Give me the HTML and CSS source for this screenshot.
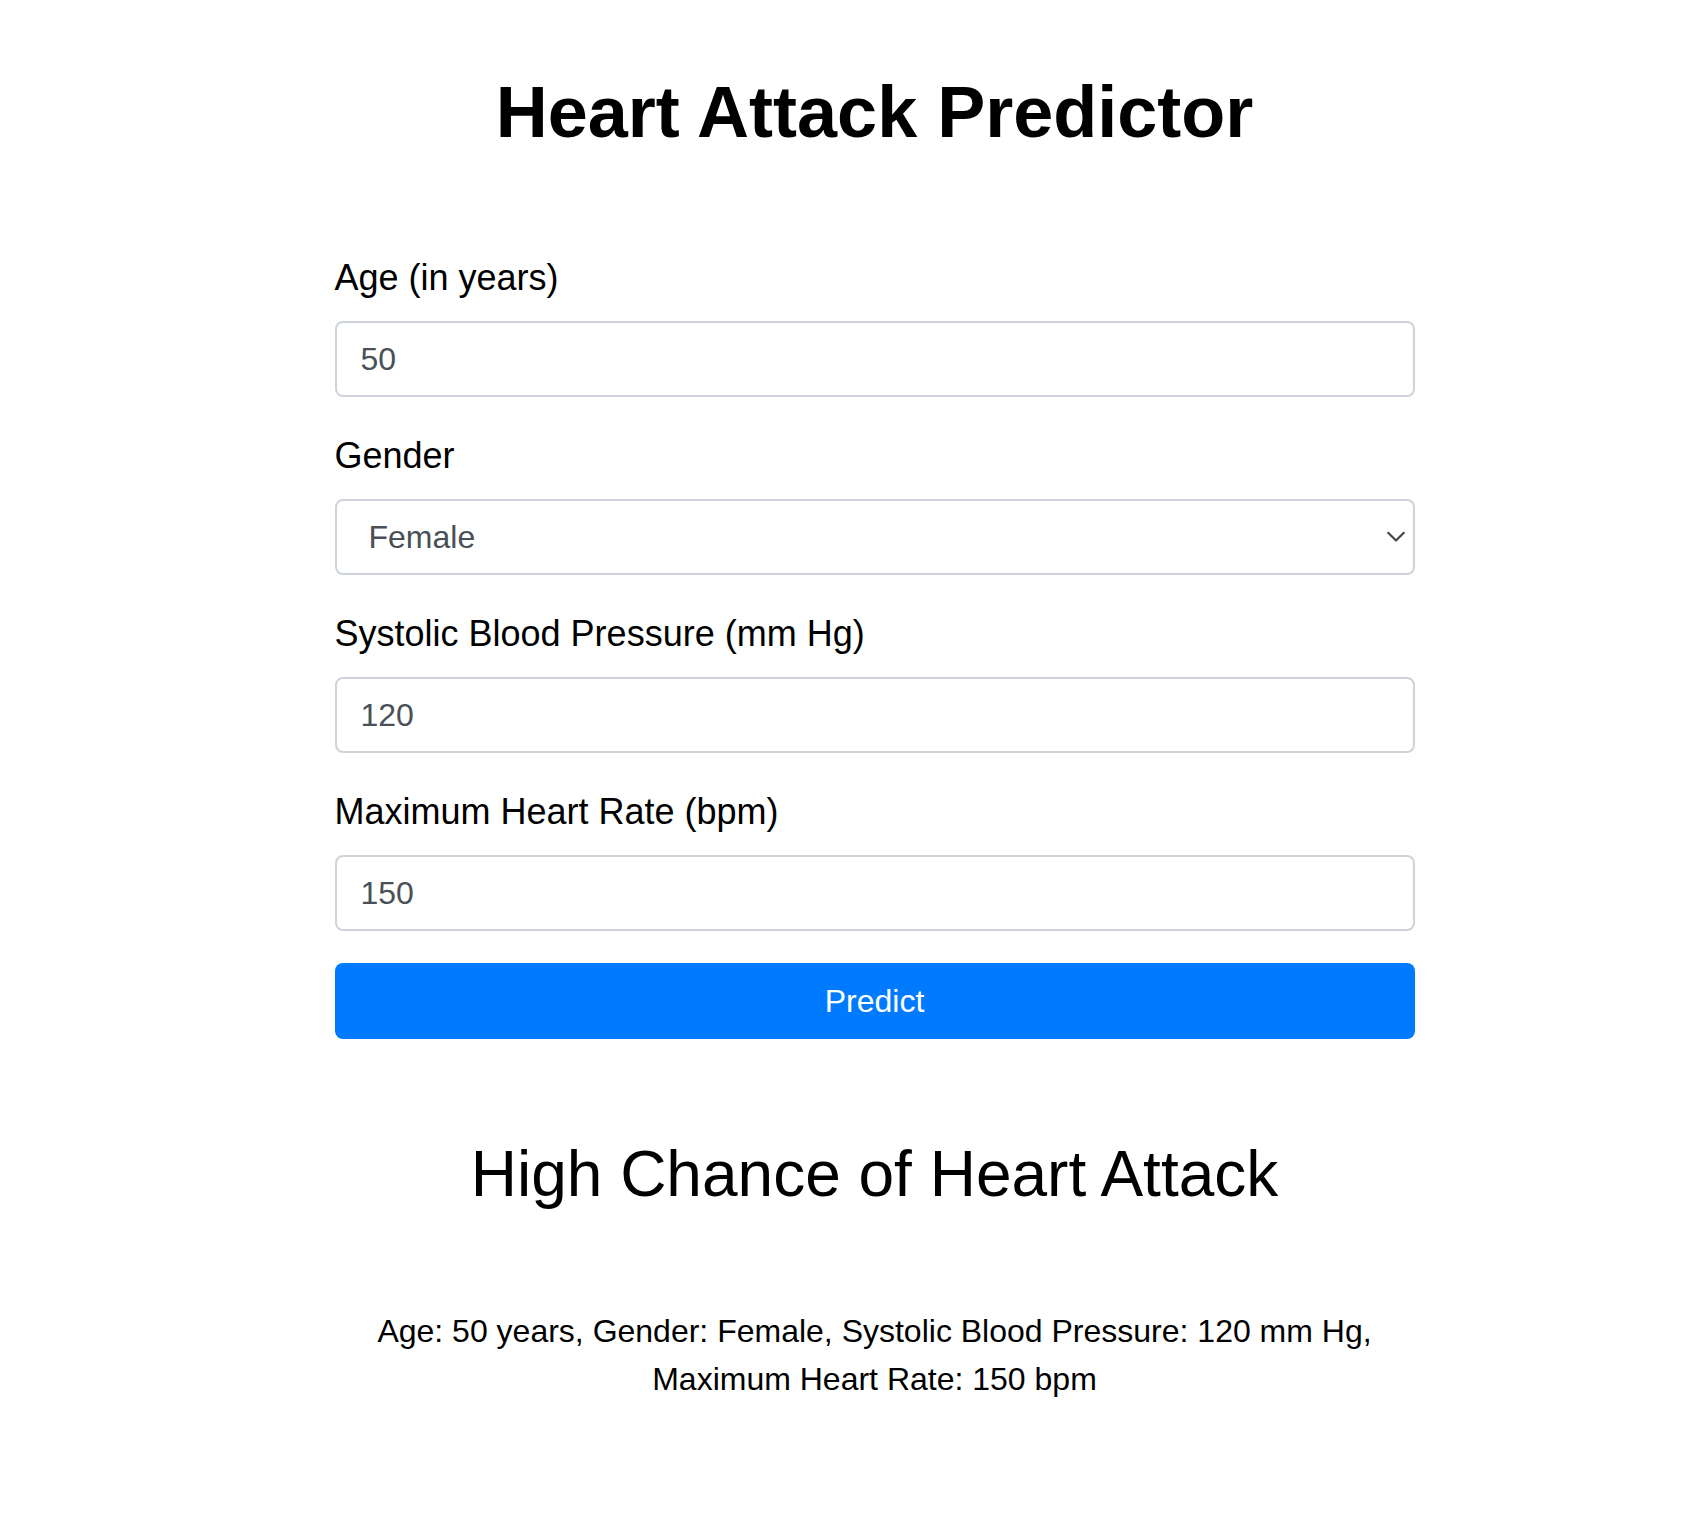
FILE: index.html
```html
<!DOCTYPE html>
<html lang="en">
<head>
<meta charset="utf-8">
<title>Heart Attack Predictor</title>
<link rel="stylesheet" href="styles.css">
</head>
<body>
<div class="container">
  <h1 class="title">Heart Attack Predictor</h1>
  <form class="form">
    <div class="group">
      <label class="label" for="age">Age (in years)</label>
      <input class="field" id="age" type="text" value="50">
    </div>
    <div class="group">
      <label class="label" for="gender">Gender</label>
      <div class="select-wrap">
        <select class="field select" id="gender">
          <option>Female</option>
          <option>Male</option>
        </select>
        <svg class="chevron" width="18" height="11" viewBox="0 0 18 11"><path d="M1.2 1.2 L9 9 L16.8 1.2" fill="none" stroke="#45494d" stroke-width="2.2" stroke-linecap="round" stroke-linejoin="round"/></svg>
      </div>
    </div>
    <div class="group">
      <label class="label" for="sbp">Systolic Blood Pressure (mm Hg)</label>
      <input class="field" id="sbp" type="text" value="120">
    </div>
    <div class="group">
      <label class="label" for="hr">Maximum Heart Rate (bpm)</label>
      <input class="field" id="hr" type="text" value="150">
    </div>
    <button class="btn" type="button">Predict</button>
  </form>
  <div class="result">
    <h2 class="result-title">High Chance of Heart Attack</h2>
    <p class="result-text">Age: 50 years, Gender: Female, Systolic Blood Pressure: 120 mm Hg, Maximum Heart Rate: 150 bpm</p>
  </div>
</div>
</body>
</html>
```
FILE: styles.css
```css
html, body {
  margin: 0;
  background: #fff;
}
body {
  padding: 0 0 0 42px;
  font-family: "Liberation Sans", Arial, sans-serif;
  color: #000;
}
.container {
  width: 1080px;
  margin: 0 auto;
  padding-top: 69px;
}
.title {
  margin: 0 0 96px;
  font-size: 72px;
  line-height: 86.4px;
  font-weight: 700;
  text-align: center;
}
.form {
  display: flex;
  flex-direction: column;
}
.group {
  display: flex;
  flex-direction: column;
  margin-bottom: 32px;
}
.label {
  font-size: 36px;
  line-height: 54px;
  margin-bottom: 16px;
}
.field {
  box-sizing: border-box;
  width: 100%;
  height: 76px;
  margin: 0;
  padding: 12px 24px;
  border: 2px solid #ced4da;
  border-radius: 8px;
  background: #fff;
  font-family: "Liberation Sans", Arial, sans-serif;
  font-size: 32px;
  line-height: 48px;
  color: #495057;
  outline: none;
}
.select-wrap {
  position: relative;
}
.select {
  appearance: none;
  -webkit-appearance: none;
  padding-left: 32px;
}
.chevron {
  position: absolute;
  right: 10px;
  top: 50%;
  transform: translateY(-50%);
  pointer-events: none;
}
.btn {
  height: 76px;
  width: 100%;
  border: 0;
  border-radius: 8px;
  background: #007bff;
  color: #fff;
  font-family: "Liberation Sans", Arial, sans-serif;
  font-size: 32px;
  line-height: 48px;
  padding: 0;
}
.result {
  margin-top: 97px;
  text-align: center;
}
.result-title {
  margin: 0 0 94px;
  font-size: 64px;
  line-height: 76.8px;
  font-weight: 400;
}
.result-text {
  margin: 0;
  font-size: 32px;
  line-height: 48px;
}
```
